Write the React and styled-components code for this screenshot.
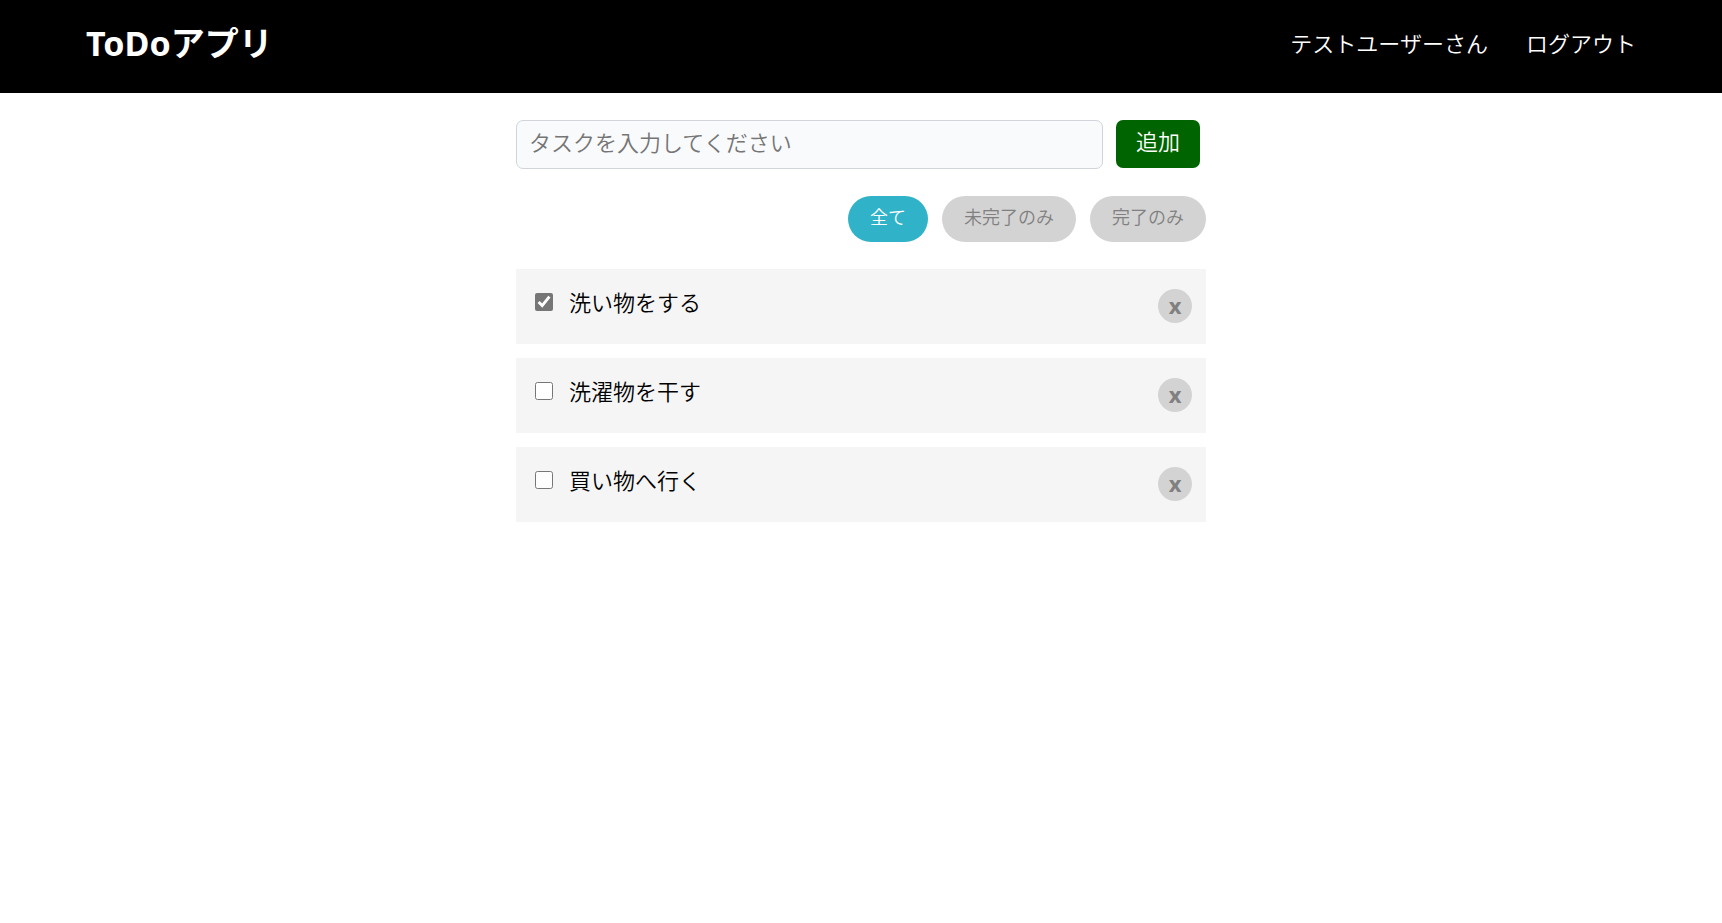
import React, { useState } from "react";
import styled, { createGlobalStyle } from "styled-components";

const GlobalStyle = createGlobalStyle`
  *, *::before, *::after {
    box-sizing: border-box;
  }

  body {
    margin: 0;
    background: #fff;
    color: #000;
    font-family: "Noto Sans", "Noto Sans CJK JP", sans-serif;
    font-size: 22px;
    font-weight: 350;
    line-height: 32px;
  }

  button,
  input {
    font: inherit;
  }
`;

const Header = styled.header`
  display: flex;
  align-items: flex-start;
  justify-content: space-between;
  padding: 19px 5% 26px;
  background: #000;
  color: #fff;
`;

const Title = styled.h1`
  margin: 0;
  font-size: 34px;
  font-weight: 700;
  line-height: 48px;
`;

const Nav = styled.nav`
  display: flex;
  gap: 38px;
  padding-top: 8px;
`;

const NavLink = styled.a`
  color: inherit;
  text-decoration: none;
`;

const Main = styled.main`
  width: 100%;
  max-width: 690px;
  margin: 27px auto 0;
`;

const TaskForm = styled.form`
  display: flex;
  gap: 13px;
  padding-right: 6px;
`;

const TaskInput = styled.input`
  flex: 1;
  min-width: 0;
  height: 49px;
  padding: 0 12px 6px;
  border: 1px solid #d1d5db;
  border-radius: 7px;
  background: #f9fafb;
  color: #111;

  &::placeholder {
    color: #757575;
    opacity: 1;
  }
`;

const AddButton = styled.button`
  height: 48px;
  padding: 0 20px 6px;
  border: 0;
  border-radius: 7px;
  background: #006400;
  color: #fff;
  cursor: pointer;
`;

const Filters = styled.div`
  display: flex;
  justify-content: flex-end;
  gap: 14px;
  margin: 27px 0;
`;

const FilterButton = styled.button`
  height: 46px;
  padding: 0 22px 4px;
  border: 0;
  border-radius: 23px;
  background: ${({ $active }) => ($active ? "#30b3c8" : "#d3d3d3")};
  color: ${({ $active }) => ($active ? "#fff" : "#808080")};
  font-size: 18px;
  cursor: pointer;
`;

const TaskList = styled.ul`
  display: flex;
  flex-direction: column;
  gap: 14px;
  margin: 0;
  padding: 0;
  list-style: none;
`;

const TaskItem = styled.li`
  display: flex;
  align-items: flex-start;
  justify-content: space-between;
  min-height: 75px;
  padding: 17px 14px 17px 19px;
  background: #f5f5f5;
`;

const TaskLabel = styled.label`
  display: flex;
  align-items: center;
  gap: 16px;
`;

const Checkbox = styled.input`
  width: 18px;
  height: 18px;
  margin: 0;
  accent-color: #767676;
`;

const DeleteButton = styled.button`
  width: 34px;
  height: 34px;
  margin-top: 3px;
  padding: 0 0 2px;
  border: 0;
  border-radius: 50%;
  background: #d3d3d3;
  color: #808080;
  font-weight: 700;
  cursor: pointer;
`;

const FILTERS = [
  { id: "all", label: "全て", test: () => true },
  { id: "active", label: "未完了のみ", test: (t) => !t.done },
  { id: "done", label: "完了のみ", test: (t) => t.done },
];

const INITIAL_TASKS = [
  { id: 1, text: "洗い物をする", done: true },
  { id: 2, text: "洗濯物を干す", done: false },
  { id: 3, text: "買い物へ行く", done: false },
];

export default function App() {
  const [tasks, setTasks] = useState(INITIAL_TASKS);
  const [filterId, setFilterId] = useState("all");
  const [draft, setDraft] = useState("");
  const filter = FILTERS.find((f) => f.id === filterId);

  const addTask = (e) => {
    e.preventDefault();
    const text = draft.trim();
    if (!text) return;
    setTasks([...tasks, { id: Date.now(), text, done: false }]);
    setDraft("");
  };

  const toggle = (id) =>
    setTasks(tasks.map((t) => (t.id === id ? { ...t, done: !t.done } : t)));

  return (
    <>
      <GlobalStyle />
      <Header>
        <Title>ToDoアプリ</Title>
        <Nav>
          <NavLink href="#user">テストユーザーさん</NavLink>
          <NavLink href="#logout">ログアウト</NavLink>
        </Nav>
      </Header>
      <Main>
        <TaskForm onSubmit={addTask}>
          <TaskInput
            aria-label="タスク"
            placeholder="タスクを入力してください"
            value={draft}
            onChange={(e) => setDraft(e.target.value)}
          />
          <AddButton type="submit">追加</AddButton>
        </TaskForm>
        <Filters>
          {FILTERS.map((f) => (
            <FilterButton
              key={f.id}
              type="button"
              $active={f.id === filterId}
              aria-pressed={f.id === filterId}
              onClick={() => setFilterId(f.id)}
            >
              {f.label}
            </FilterButton>
          ))}
        </Filters>
        <TaskList>
          {tasks.filter(filter.test).map((task) => (
            <TaskItem key={task.id}>
              <TaskLabel>
                <Checkbox
                  type="checkbox"
                  checked={task.done}
                  onChange={() => toggle(task.id)}
                />
                {task.text}
              </TaskLabel>
              <DeleteButton
                type="button"
                onClick={() => setTasks(tasks.filter((t) => t.id !== task.id))}
              >
                x
              </DeleteButton>
            </TaskItem>
          ))}
        </TaskList>
      </Main>
    </>
  );
}
